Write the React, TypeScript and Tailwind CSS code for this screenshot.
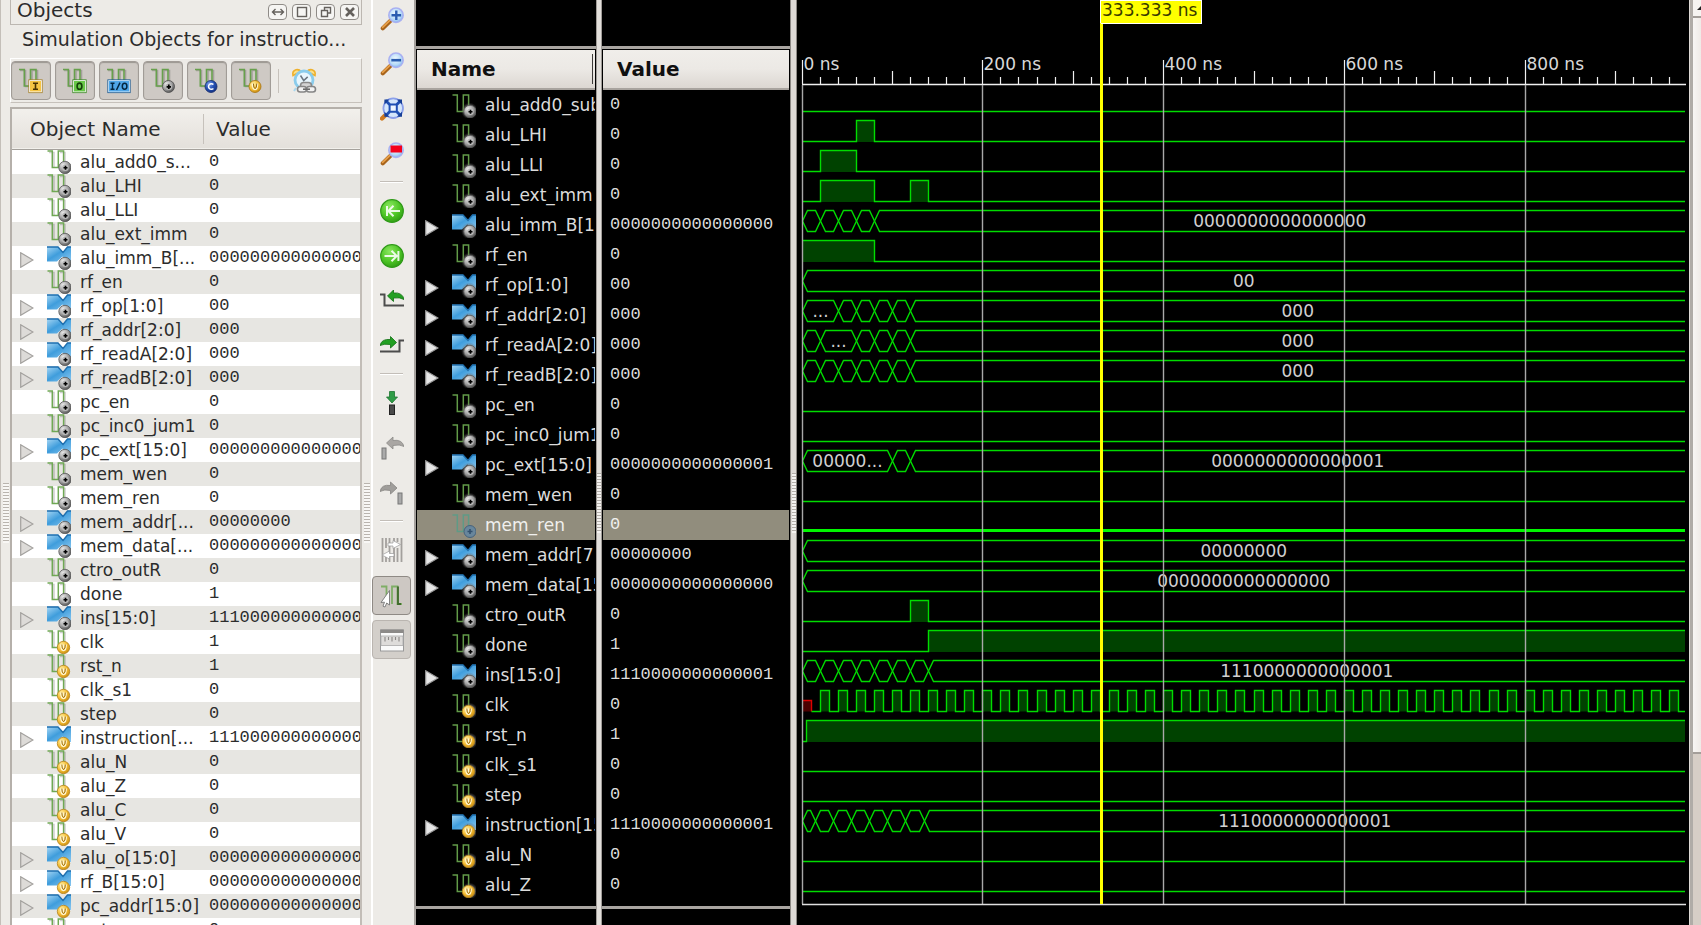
import React from "react";

type Badge = "internal" | "variable";
type Signal = { name: string; short?: string; value: string; bus?: boolean; badge: Badge };

const ZEROS = "0000000000000000";
const INS = "1110000000000001";

const objects: Signal[] = [
  { name: "alu_add0_s...", value: "0", badge: "internal" },
  { name: "alu_LHI", value: "0", badge: "internal" },
  { name: "alu_LLI", value: "0", badge: "internal" },
  { name: "alu_ext_imm", value: "0", badge: "internal" },
  { name: "alu_imm_B[...", value: ZEROS, bus: true, badge: "internal" },
  { name: "rf_en", value: "0", badge: "internal" },
  { name: "rf_op[1:0]", value: "00", bus: true, badge: "internal" },
  { name: "rf_addr[2:0]", value: "000", bus: true, badge: "internal" },
  { name: "rf_readA[2:0]", value: "000", bus: true, badge: "internal" },
  { name: "rf_readB[2:0]", value: "000", bus: true, badge: "internal" },
  { name: "pc_en", value: "0", badge: "internal" },
  { name: "pc_inc0_jum1", value: "0", badge: "internal" },
  { name: "pc_ext[15:0]", value: ZEROS, bus: true, badge: "internal" },
  { name: "mem_wen", value: "0", badge: "internal" },
  { name: "mem_ren", value: "0", badge: "internal" },
  { name: "mem_addr[...", value: "00000000", bus: true, badge: "internal" },
  { name: "mem_data[...", value: ZEROS, bus: true, badge: "internal" },
  { name: "ctro_outR", value: "0", badge: "internal" },
  { name: "done", value: "1", badge: "internal" },
  { name: "ins[15:0]", value: INS, bus: true, badge: "internal" },
  { name: "clk", value: "1", badge: "variable" },
  { name: "rst_n", value: "1", badge: "variable" },
  { name: "clk_s1", value: "0", badge: "variable" },
  { name: "step", value: "0", badge: "variable" },
  { name: "instruction[...", value: INS, bus: true, badge: "variable" },
  { name: "alu_N", value: "0", badge: "variable" },
  { name: "alu_Z", value: "0", badge: "variable" },
  { name: "alu_C", value: "0", badge: "variable" },
  { name: "alu_V", value: "0", badge: "variable" },
  { name: "alu_o[15:0]", value: ZEROS, bus: true, badge: "variable" },
  { name: "rf_B[15:0]", value: ZEROS, bus: true, badge: "variable" },
  { name: "pc_addr[15:0]", value: ZEROS, bus: true, badge: "variable" },
  { name: "out_mem_ou", value: "0", badge: "variable" },
];

type Wave =
  | { kind: "level"; high: [number, number][] }
  | { kind: "clock" }
  | { kind: "bus"; cuts: number[]; labels: Record<number, string> };

const END = 10000;
const low: Wave = { kind: "level", high: [] };

const waves: (Signal & { wave: Wave })[] = [
  { name: "alu_add0_sub1", value: "0", badge: "internal", wave: low },
  { name: "alu_LHI", value: "0", badge: "internal", wave: { kind: "level", high: [[60, 80]] } },
  { name: "alu_LLI", value: "0", badge: "internal", wave: { kind: "level", high: [[20, 60]] } },
  { name: "alu_ext_imm", value: "0", badge: "internal", wave: { kind: "level", high: [[20, 80], [120, 140]] } },
  { name: "alu_imm_B[15:0]", short: "alu_imm_B[1", value: ZEROS, bus: true, badge: "internal", wave: { kind: "bus", cuts: [20, 40, 60, 80], labels: { 4: ZEROS } } },
  { name: "rf_en", value: "0", badge: "internal", wave: { kind: "level", high: [[0, 80]] } },
  { name: "rf_op[1:0]", value: "00", bus: true, badge: "internal", wave: { kind: "bus", cuts: [], labels: { 0: "00" } } },
  { name: "rf_addr[2:0]", value: "000", bus: true, badge: "internal", wave: { kind: "bus", cuts: [40, 60, 80, 100, 120], labels: { 0: "...", 5: "000" } } },
  { name: "rf_readA[2:0]", value: "000", bus: true, badge: "internal", wave: { kind: "bus", cuts: [20, 60, 80, 100, 120], labels: { 1: "...", 5: "000" } } },
  { name: "rf_readB[2:0]", value: "000", bus: true, badge: "internal", wave: { kind: "bus", cuts: [20, 40, 60, 80, 100, 120], labels: { 6: "000" } } },
  { name: "pc_en", value: "0", badge: "internal", wave: low },
  { name: "pc_inc0_jum1", value: "0", badge: "internal", wave: low },
  { name: "pc_ext[15:0]", value: "0000000000000001", bus: true, badge: "internal", wave: { kind: "bus", cuts: [100, 120], labels: { 0: "00000...", 2: "0000000000000001" } } },
  { name: "mem_wen", value: "0", badge: "internal", wave: low },
  { name: "mem_ren", value: "0", badge: "internal", wave: low },
  { name: "mem_addr[7:0]", short: "mem_addr[7", value: "00000000", bus: true, badge: "internal", wave: { kind: "bus", cuts: [], labels: { 0: "00000000" } } },
  { name: "mem_data[15:0]", short: "mem_data[15", value: ZEROS, bus: true, badge: "internal", wave: { kind: "bus", cuts: [], labels: { 0: ZEROS } } },
  { name: "ctro_outR", value: "0", badge: "internal", wave: { kind: "level", high: [[120, 140]] } },
  { name: "done", value: "1", badge: "internal", wave: { kind: "level", high: [[140, END]] } },
  { name: "ins[15:0]", value: INS, bus: true, badge: "internal", wave: { kind: "bus", cuts: [20, 40, 60, 80, 100, 120, 140], labels: { 7: INS } } },
  { name: "clk", value: "0", badge: "variable", wave: { kind: "clock" } },
  { name: "rst_n", value: "1", badge: "variable", wave: { kind: "level", high: [[5, END]] } },
  { name: "clk_s1", value: "0", badge: "variable", wave: low },
  { name: "step", value: "0", badge: "variable", wave: low },
  { name: "instruction[15:0]", short: "instruction[15", value: INS, bus: true, badge: "variable", wave: { kind: "bus", cuts: [15, 35, 55, 75, 95, 115, 135], labels: { 7: INS } } },
  { name: "alu_N", value: "0", badge: "variable", wave: low },
  { name: "alu_Z", value: "0", badge: "variable", wave: low },
];

const SELECTED = 14;

/* ---------- signal icons ---------- */

function Defs() {
  return (
    <svg className="absolute size-0" aria-hidden="true">
      <defs>
        <radialGradient id="gGray" cx="0.35" cy="0.3" r="0.8">
          <stop offset="0" stopColor="#ececec" />
          <stop offset="0.5" stopColor="#a2a2a2" />
          <stop offset="1" stopColor="#484848" />
        </radialGradient>
        <radialGradient id="gGold" cx="0.35" cy="0.3" r="0.8">
          <stop offset="0" stopColor="#fff0a8" />
          <stop offset="0.5" stopColor="#f6c038" />
          <stop offset="1" stopColor="#c4860c" />
        </radialGradient>
        <radialGradient id="gNavy" cx="0.35" cy="0.3" r="0.8">
          <stop offset="0" stopColor="#7fa0ea" />
          <stop offset="0.5" stopColor="#2450b4" />
          <stop offset="1" stopColor="#122c78" />
        </radialGradient>
        <linearGradient id="gBlue" x1="0" y1="0" x2="1" y2="1">
          <stop offset="0" stopColor="#a6d6f4" />
          <stop offset="0.45" stopColor="#3f9ddc" />
          <stop offset="1" stopColor="#8cc8f0" />
        </linearGradient>
        <radialGradient id="gGlow">
          <stop offset="0" stopColor="#d8d8d8" stopOpacity="0.8" />
          <stop offset="0.65" stopColor="#8a8a8a" stopOpacity="0.6" />
          <stop offset="1" stopColor="#555" stopOpacity="0" />
        </radialGradient>
        <radialGradient id="gGreen" cx="0.4" cy="0.3" r="0.75">
          <stop offset="0" stopColor="#8be860" />
          <stop offset="0.6" stopColor="#4cc424" />
          <stop offset="1" stopColor="#2f9a14" />
        </radialGradient>
        <radialGradient id="gLens" cx="0.45" cy="0.4" r="0.6">
          <stop offset="0" stopColor="#f2faff" />
          <stop offset="0.7" stopColor="#b5daf8" />
          <stop offset="1" stopColor="#86b4ee" />
        </radialGradient>
      </defs>
    </svg>
  );
}

function BadgeMark({ badge }: { badge: Badge }) {
  return badge === "internal" ? (
    <g>
      <circle cx="18" cy="17.5" r="6.2" fill="url(#gGray)" stroke="#585858" strokeWidth="0.8" />
      <circle cx="18.4" cy="17.8" r="3.2" fill="#bcbcbc" />
      <path d="M18.500 15.800v4M16.500 17.800h4" stroke="#000" strokeWidth="1.600" />
    </g>
  ) : (
    <g>
      <circle cx="16.5" cy="17.5" r="6.2" fill="url(#gGold)" stroke="#b48422" strokeWidth="0.8" />
      <path d="M13.8 14.6q0 6 2.7 6t2.7-6M16.5 14.5v4" fill="none" stroke="#fff6d0" strokeWidth="1.4" />
      <path d="M14.8 14.6q0 4.4 1.8 5 1.8-.6 1.8-5" fill="none" stroke="#8a5c08" strokeWidth="0.8" />
    </g>
  );
}

function SignalIcon({ bus, badge, dark, dim }: { bus?: boolean; badge: Badge; dark?: boolean; dim?: boolean }) {
  return (
    <svg viewBox="0 0 24 24" className="size-6 shrink-0" aria-hidden="true">
      {bus ? (
        <>
          <path d="M0 .8H11L16 6.2L20.5 .8H24V16H20L15.5 10.5L10 15.5H0Z" fill="url(#gBlue)" />
          <path d="M0 1H11L16 6.4L20.5 1H24" fill="none" stroke="#1f6fae" strokeWidth="1.4" />
        </>
      ) : (
        <>
          {!dark && <path d="M2 2.5H7V17.5M13 2.5H18V12" fill="none" stroke="#000" strokeOpacity="0.18" strokeWidth="1.6" />}
          <path d="M.5 1H5.3V17.5H11.3V1H16.6V13" fill="none" stroke={dim ? "#5f9a86" : dark ? "#629a48" : "#6fa854"} strokeWidth="1.5" />
        </>
      )}
      {dark && !dim && <circle cx="17.5" cy="17" r="8.5" fill="url(#gGlow)" />}
      {dim ? (
        <g>
          <circle cx="18" cy="17.5" r="6" fill="#68869c" stroke="#46627c" />
          <path d="M18 15v5M15.500 17.500h5" stroke="#33506e" strokeWidth="1.600" />
        </g>
      ) : (
        <BadgeMark badge={badge} />
      )}
    </svg>
  );
}

function FilterIcon({ tag }: { tag: "I" | "O" | "IO" | "S" | "C" | "V" }) {
  return (
    <svg viewBox="0 0 26 26" className="size-[26px]" aria-hidden="true">
      <path d="M2 2.5H7.5V18.5H14V2.5H19.5V14" fill="none" stroke="#000" strokeOpacity="0.2" strokeWidth="1.6" />
      <path d="M1 1.5H6.3V18H12.5V1.5H18V14" fill="none" stroke="#67a04c" strokeWidth="1.6" />
      {tag === "I" && (
        <g>
          <rect x="11.5" y="12.5" width="12" height="11.5" fill="#f6c443" stroke="#fff" />
          <rect x="10.8" y="11.8" width="13.4" height="12.9" fill="none" stroke="#a8842c" strokeWidth="0.8" />
          <path d="M15 15.2h5M17.5 15.2v6M15 21.2h5" stroke="#4a3200" strokeWidth="1.6" fill="none" />
        </g>
      )}
      {tag === "O" && (
        <g>
          <rect x="11.5" y="12.5" width="12" height="11.5" fill="#68c848" stroke="#fff" />
          <rect x="10.8" y="11.8" width="13.4" height="12.9" fill="none" stroke="#3d8a26" strokeWidth="0.8" />
          <ellipse cx="17.5" cy="18.2" rx="2.4" ry="3.1" stroke="#14400a" strokeWidth="1.6" fill="none" />
        </g>
      )}
      {tag === "IO" && (
        <g>
          <rect x="2.5" y="12.5" width="21" height="11.5" fill="#4fa6e8" stroke="#d8efff" />
          <rect x="1.8" y="11.8" width="22.4" height="12.9" fill="none" stroke="#1d5c94" strokeWidth="0.8" />
          <path d="M4.5 15.3h4M6.5 15.3v6M4.5 21.3h4M10.5 22l3.5-7.4" stroke="#04263f" strokeWidth="1.5" fill="none" />
          <ellipse cx="18.6" cy="18.3" rx="2.3" ry="3" stroke="#04263f" strokeWidth="1.5" fill="none" />
        </g>
      )}
      {tag === "S" && (
        <g>
          <circle cx="18.5" cy="18.5" r="6" fill="url(#gGray)" stroke="#4a4a4a" strokeWidth="0.8" />
          <circle cx="18.8" cy="18.8" r="3.2" fill="#b4b4b4" />
          <path d="M18.800 16.600v4.400M16.600 18.800h4.400" stroke="#000" strokeWidth="1.700" />
        </g>
      )}
      {tag === "C" && (
        <g>
          <circle cx="17" cy="18.5" r="6" fill="url(#gNavy)" stroke="#142c70" strokeWidth="0.8" />
          <path d="M19.4 16.6a2.8 2.8 0 1 0 0 3.8" stroke="#fff" strokeWidth="1.5" fill="none" />
        </g>
      )}
      {tag === "V" && (
        <g>
          <circle cx="17" cy="18.5" r="6" fill="url(#gGold)" stroke="#a87412" strokeWidth="0.8" />
          <path d="M14.4 15.6q0 6 2.6 6t2.6-6" fill="none" stroke="#fff6d0" strokeWidth="1.4" />
          <path d="M15.4 15.6q0 4.4 1.7 5 1.7-.6 1.7-5" fill="none" stroke="#8a5c08" strokeWidth="0.9" />
        </g>
      )}
    </svg>
  );
}

function ClockIcon() {
  return (
    <svg viewBox="0 0 26 26" className="size-[26px]" aria-hidden="true">
      <path d="M2 7.500Q1 3 5 1.800Q8 1 10 3.500ZM24 7.500Q25 3 21 1.800Q18 1 16 3.500Z" fill="#fae08c" stroke="#eeb02c" strokeWidth="1.600" />
      <circle cx="13" cy="12" r="9" fill="#e8f6fd" stroke="#8accec" strokeWidth="2.800" />
      <path d="M9.500 7.500l3.200 5 4-3.600" fill="none" stroke="#6c7680" strokeWidth="1.500" />
      <path d="M5 20l-2 3" stroke="#a9d8ee" strokeWidth="2" />
      <rect x="9.500" y="14.500" width="11" height="6.500" rx="3.200" fill="#d4d4d4" stroke="#8a8a8a" strokeWidth="1.600" />
      <rect x="6.500" y="18.500" width="9" height="5.500" rx="2.700" fill="#f2f2f2" stroke="#858585" strokeWidth="1.600" />
      <rect x="15.500" y="18.500" width="9" height="5.500" rx="2.700" fill="#f2f2f2" stroke="#858585" strokeWidth="1.600" />
      <path d="M12 21.200h7" stroke="#6a6a6a" strokeWidth="1.600" />
    </svg>
  );
}

/* ---------- vertical tool bar icons ---------- */

function Magnifier({ children, fit }: { children?: React.ReactNode; fit?: boolean }) {
  return (
    <svg viewBox="0 0 24 24" className="size-6" aria-hidden="true">
      {fit ? (
        <>
          <path d="M2 21.500l3-3" stroke="#d07a20" strokeWidth="4.400" strokeLinecap="round" />
          <circle cx="13.2" cy="11.2" r="9.8" fill="#d4e6fb" stroke="#8ca0ea" strokeWidth="1.8" />
        </>
      ) : (
        <>
          <path d="M2.8 21.2l7.4-7.2" stroke="#a8641c" strokeWidth="4.2" strokeLinecap="round" />
          <path d="M2.6 20.4l7-6.8" stroke="#eaa24a" strokeWidth="1.6" strokeLinecap="round" />
          <circle cx="16" cy="8.2" r="7.2" fill="url(#gLens)" stroke="#a9b0f2" strokeWidth="1.5" />
        </>
      )}
      {children}
    </svg>
  );
}

const ZoomIn = () => (
  <Magnifier>
    <path d="M16.3 3.4v9.6M11.5 8.2h9.6" stroke="#2a5cb0" strokeWidth="2.4" />
  </Magnifier>
);
const ZoomOut = () => (
  <Magnifier>
    <path d="M11.3 8.2h9.8" stroke="#2a5cb0" strokeWidth="2.6" />
  </Magnifier>
);
const ZoomFit = () => (
  <Magnifier fit>
    <path d="M9.6 7.6h7.2v7.2h-7.2z" fill="#eef6ff" stroke="#1f4fb4" strokeWidth="2" />
    <path d="M5.6 3.6l4 4M20.8 3.6l-4 4M5.6 18.8l4-4M20.8 18.8l-4-4" stroke="#1f4fb4" strokeWidth="2.8" />
    <path d="M4.4 2.6h5l-5 5zM22 2.6h-5l5 5zM4.4 19.8h5l-5-5zM22 19.8h-5l5-5z" fill="#173f96" />
  </Magnifier>
);
const ZoomCursor = () => (
  <Magnifier>
    <rect x="10.5" y="3.5" width="11.5" height="7" fill="#f4001c" />
  </Magnifier>
);

function GoCircle({ forward }: { forward?: boolean }) {
  return (
    <svg viewBox="0 0 24 24" className="size-6" aria-hidden="true">
      <circle cx="12" cy="12" r="11.3" fill="url(#gGreen)" stroke="#2f9a18" strokeWidth="1.2" />
      {forward ? (
        <path d="M4.5 12h12M11.5 6.8l5.2 5.2-5.2 5.2M18.4 7v10" fill="none" stroke="#fff" strokeOpacity="0.88" strokeWidth="2" />
      ) : (
        <path d="M20 12H8.5M13.5 6.8L8.3 12l5.2 5.2M7 7v10" fill="none" stroke="#fff" strokeOpacity="0.88" strokeWidth="2" />
      )}
    </svg>
  );
}

const PrevEdge = () => (
  <svg viewBox="0 0 24 24" className="size-6" aria-hidden="true">
    <path d="M0 5.5H4.5V16.5H24" fill="none" stroke="#4c4c4c" strokeWidth="2" />
    <path d="M7.500 7L13.500 1V4q9-1 10.500 6.500Q20 8 13.500 9V12.500z" fill="#22a022" stroke="#0f6e12" strokeWidth="0.800" />
  </svg>
);
const NextEdge = () => (
  <svg viewBox="0 0 24 24" className="size-6" aria-hidden="true">
    <path d="M0 17.500H19.500V6.500H24" fill="none" stroke="#4c4c4c" strokeWidth="2" />
    <path d="M16.500 8.500L10.500 2.500V5.500q-9-1-10.500 6Q4 9.500 10.500 10.500V14z" fill="#22a022" stroke="#0f6e12" strokeWidth="0.800" />
  </svg>
);
const AddMarker = () => (
  <svg viewBox="0 0 24 24" className="size-6" aria-hidden="true">
    <path d="M9.500 .5h5v5.500h3l-5.500 6L6.500 6h3z" fill="#2f9c46" stroke="#1c7430" strokeWidth="0.800" />
    <rect x="9.500" y="14" width="5" height="9.500" fill="#4a4a4a" stroke="#222" />
  </svg>
);
const PrevMarker = () => (
  <svg viewBox="0 0 24 24" className="size-6" aria-hidden="true">
    <path d="M6.500 7L13 1V4.500q9-1.500 11 6Q20 8 13 9.500V13z" fill="#a9a6a3" stroke="#8c8a88" strokeWidth="0.8" />
    <rect x="2" y="12" width="4" height="11" fill="#aaa" stroke="#777" />
  </svg>
);
const NextMarker = () => (
  <svg viewBox="0 0 24 24" className="size-6" aria-hidden="true">
    <path d="M17 7L10.500 1V4.500q-9-1.500-10.500 6Q4 8 10.500 9.500V13z" fill="#a09e9b" stroke="#868482" strokeWidth="0.8" />
    <rect x="18" y="12" width="4" height="11" fill="#aaa" stroke="#777" />
  </svg>
);
const SwapCursors = () => (
  <svg viewBox="0 0 24 24" className="size-6" aria-hidden="true">
    <path d="M2.500 0v24M6 0v10M6 19v5M9.500 0v24M14 0v24M17.500 0v4M17.500 10v14M21.500 0v24" stroke="#a3a09d" strokeWidth="1.800" />
    <path d="M20.500 6.500L13 2.500v2.500H8v3h5v2.500zM2 17l7.500-4v2.500H14v3H9.500V21z" fill="#fff" stroke="#999" strokeWidth="0.7" />
  </svg>
);
const SnapTransition = () => (
  <svg viewBox="0 0 24 24" className="size-6" aria-hidden="true">
    <path d="M1 2.500H6.500V20M12 20V2.500H17.500V20H22" fill="none" stroke="#7fae66" strokeWidth="1.800" />
    <path d="M18 2.500V20H21" fill="none" stroke="#3f6b2c" strokeWidth="1.800" />
    <path d="M9.500 6.500V21l-2.800-2L5 23l-2-.8 1.500-4-3.500.3z" fill="#fff" stroke="#777" strokeWidth="0.900" />
  </svg>
);
const FloatRuler = () => (
  <svg viewBox="0 0 24 24" className="size-6" aria-hidden="true">
    <rect x="0.500" y="2" width="23" height="21" fill="#fafafa" stroke="#999" />
    <rect x="0.500" y="1.500" width="23" height="3.500" fill="#8c8a88" />
    <rect x="1" y="8" width="22" height="9.500" fill="#dedcda" stroke="#aaa" strokeWidth="0.800" />
    <path d="M5 9v4.500M8.500 9v3M12 9v4.500M15.500 9v3M19 9v4.500" stroke="#8a8886" strokeWidth="1.100" />
  </svg>
);

/* ---------- small pieces ---------- */

function Expander({ dark, label }: { dark?: boolean; label: string }) {
  return (
    <button type="button" aria-label={label} className="mt-1 flex h-4 w-[14px] items-center justify-center">
      <svg viewBox="0 0 14 16" className="h-4 w-[14px]" aria-hidden="true">
        <path d="M.7 .7L13 8L.7 15.300Z" fill={dark ? "#e8e8e8" : "#dddbd8"} stroke={dark ? "#9a9a9a" : "#a3a19e"} strokeWidth="1.200" />
      </svg>
    </button>
  );
}

function Grip() {
  return <div className="h-[60px] w-[6px] bg-[repeating-linear-gradient(to_bottom,#b9b4ae_0px,#b9b4ae_1px,#f8f7f5_1px,#f8f7f5_3px)]" />;
}

function Splitter({ wide }: { wide?: boolean }) {
  return (
    <div
      className={
        wide
          ? "flex w-[7px] shrink-0 items-center justify-center border-x border-[#8d8985] bg-[#dedad6] pt-[80px]"
          : "flex w-[6px] shrink-0 items-center justify-center border-x border-[#a09c98] bg-[#e2dfdb] pt-[80px]"
      }
    >
      <div className="h-[60px] w-1 bg-[repeating-linear-gradient(to_bottom,#b3aea9_0px,#b3aea9_1px,#f4f2f0_1px,#f4f2f0_3px)]" />
    </div>
  );
}

function TitleButton({ label, children }: { label: string; children: React.ReactNode }) {
  return (
    <button type="button" aria-label={label} className="flex h-4 w-[19px] items-center justify-center rounded-[4px] border border-[#8f8b87] bg-[#f6f5f3]">
      <svg viewBox="0 0 14 12" className="h-3 w-[14px]" fill="none" stroke="#65615d" strokeWidth="1.400" aria-hidden="true">
        {children}
      </svg>
    </button>
  );
}

const filters: { tag: "I" | "O" | "IO" | "S" | "C" | "V"; label: string }[] = [
  { tag: "I", label: "Input ports" },
  { tag: "O", label: "Output ports" },
  { tag: "IO", label: "Inout ports" },
  { tag: "S", label: "Internal signals" },
  { tag: "C", label: "Constants" },
  { tag: "V", label: "Variables" },
];

function ObjectsPanel() {
  return (
    <section className="flex w-[362px] shrink-0 flex-col pl-[10px]">
      <header className="flex h-[25px] shrink-0 items-start justify-between border-b border-l border-r border-[#bcb7b1] pl-[6px] pr-[2px]">
        <h2 className="text-[20px] leading-[20px]">Objects</h2>
        <div className="mt-1 flex gap-[5px]">
          <TitleButton label="Slide"><path d="M1.500 6h11M4.500 3L1.500 6l3 3M9.500 3l3 3-3 3" /></TitleButton>
          <TitleButton label="Maximize"><rect x="2.500" y="1.500" width="9" height="9" /></TitleButton>
          <TitleButton label="Float"><path d="M5.500 4V1.500h6v5.500H9M2.500 4.500h6v6h-6z" /></TitleButton>
          <TitleButton label="Close"><path d="M3 2l8 8M11 2l-8 8" strokeWidth="2.600" /></TitleButton>
        </div>
      </header>
      <p className="h-[33px] shrink-0 truncate pl-3 text-[19px] leading-[28px]">Simulation Objects for instructio...</p>
      <div className="flex h-[45px] shrink-0 items-center gap-1 border border-[#c6c1bb] border-l-[#fff] border-t-[#fff]">
        {filters.map((f) => (
          <button key={f.tag} type="button" aria-label={f.label} className="flex h-[39px] w-[40px] items-center justify-center rounded-[4px] border border-[#a19c97] bg-[#cec9c4] shadow-[inset_0_1px_1px_#9b9691]">
            <FilterIcon tag={f.tag} />
          </button>
        ))}
        <span className="mx-[3px] h-6 w-px bg-[#c6c1bb]" />
        <button type="button" aria-label="Link time" className="flex size-9 items-center justify-center">
          <ClockIcon />
        </button>
      </div>
      <div className="mt-1 min-h-0 flex-1 overflow-hidden border-2 border-b-0 border-[#c2bdb7] border-l-[#b5b0aa] border-t-[#b5b0aa]">
        <table className="w-full table-fixed border-collapse">
          <thead>
            <tr className="h-[40px] border-b border-[#a5a19c] bg-gradient-to-b from-[#f2f0ec] to-[#e4e0db] text-left text-[20px]">
              <th className="w-[192px] p-0 pl-[18px] font-normal">
                <div className="flex h-[30px] items-center border-r border-[#c6c1bb]">Object Name</div>
              </th>
              <th className="p-0 pl-3 font-normal">Value</th>
            </tr>
          </thead>
          <tbody>
            {objects.map((o) => (
              <tr key={o.name} className="h-6 bg-white even:bg-[#e7e6e2]">
                <td className="p-0">
                  <div className="flex h-6 items-center overflow-hidden whitespace-nowrap pl-2 text-[17px] leading-6">
                    <span className="w-[27px] shrink-0">{o.bus && <Expander label={`Expand ${o.name}`} />}</span>
                    <SignalIcon bus={o.bus} badge={o.badge} />
                    <span className="pl-[9px]">{o.name}</span>
                  </div>
                </td>
                <td className="p-0">
                  <div className="h-6 overflow-hidden whitespace-nowrap pl-[5px] font-['Liberation_Mono',monospace] text-[17px] leading-6">{o.value}</div>
                </td>
              </tr>
            ))}
          </tbody>
        </table>
      </div>
    </section>
  );
}

function ToolBarSeparator() {
  return <div className="my-[5px] h-[2px] w-[23px] shrink-0 border-b border-white bg-[#c3beb8]" />;
}

const toolGroups: { label: string; icon: React.ReactNode }[][] = [
  [
    { label: "Zoom in", icon: <ZoomIn /> },
    { label: "Zoom out", icon: <ZoomOut /> },
    { label: "Zoom to full view", icon: <ZoomFit /> },
    { label: "Zoom to cursor", icon: <ZoomCursor /> },
  ],
  [
    { label: "Go to time 0", icon: <GoCircle /> },
    { label: "Go to latest time", icon: <GoCircle forward /> },
    { label: "Previous transition", icon: <PrevEdge /> },
    { label: "Next transition", icon: <NextEdge /> },
  ],
  [
    { label: "Add marker", icon: <AddMarker /> },
    { label: "Previous marker", icon: <PrevMarker /> },
    { label: "Next marker", icon: <NextMarker /> },
  ],
];

function ToolBar() {
  return (
    <nav aria-label="Waveform tools" className="flex w-[45px] shrink-0 flex-col items-center border-l-2 border-r-2 border-l-white border-r-[#a5a19d] pr-1">
      {toolGroups.map((group, i) => (
        <React.Fragment key={i}>
          {i > 0 && <ToolBarSeparator />}
          {group.map((t, j) => (
            <button
              key={t.label}
              type="button"
              aria-label={t.label}
              className={i === 0 && j === 0 ? "flex h-[41px] w-[39px] shrink-0 items-center justify-center pb-1" : "flex h-[45px] w-[39px] shrink-0 items-center justify-center"}
            >
              {t.icon}
            </button>
          ))}
        </React.Fragment>
      ))}
      <ToolBarSeparator />
      <button type="button" aria-label="Swap cursors" className="flex h-[45px] w-[39px] shrink-0 items-center justify-center">
        <SwapCursors />
      </button>
      <button type="button" aria-label="Snap to transition" className="mt-1 flex h-[39px] w-[39px] shrink-0 items-center justify-center rounded-[4px] border border-[#8f8a85] bg-[#cdc8c3]">
        <SnapTransition />
      </button>
      <button type="button" aria-label="Floating ruler" className="mt-[5px] flex h-[39px] w-[39px] shrink-0 items-center justify-center rounded-[4px] border border-[#bab5b0] bg-[#d3cfca]">
        <FloatRuler />
      </button>
    </nav>
  );
}

function DarkColumn({ title, className, children }: { title: string; className: string; children: React.ReactNode }) {
  return (
    <div className={className}>
      <div className="h-[46px] shrink-0" />
      <div className="h-[3px] shrink-0 bg-[#a9a5a1]" />
      <div className="mx-px mt-px flex h-[40px] shrink-0 items-center border-b-2 border-[#a8a39e] bg-gradient-to-b from-[#f0eeea] via-[#ece9e5] to-[#dcd7d2] pl-[14px] text-[20px] font-bold text-[#101010]">
        <span className="flex-1">{title}</span>
        {title === "Name" && <span className="mr-[2px] h-[30px] w-px bg-[#3c3a38]" />}
      </div>
      <ul className="mx-px">{children}</ul>
      <div className="mt-[6px] h-[3px] shrink-0 bg-[#a9a5a1]" />
    </div>
  );
}

function NameColumn() {
  return (
    <DarkColumn title="Name" className="flex w-[180px] shrink-0 flex-col overflow-hidden bg-black">
      {waves.map((w, i) => (
        <li
          key={w.name}
          className={
            i === SELECTED
              ? "flex h-[30px] items-center overflow-hidden whitespace-nowrap bg-[#918d7d] pl-2 pt-[2px] text-[17px] text-[#f0f0ee]"
              : "flex h-[30px] items-center overflow-hidden whitespace-nowrap pl-2 pt-[2px] text-[17px] text-[#dcdcdc]"
          }
        >
          <span className="w-[27px] shrink-0">{w.bus && <Expander dark label={`Expand ${w.name}`} />}</span>
          <SignalIcon bus={w.bus} badge={w.badge} dark dim={i === SELECTED} />
          <span className="min-w-0 flex-1 overflow-hidden pl-[9px]">{w.short ?? w.name}</span>
        </li>
      ))}
    </DarkColumn>
  );
}

function ValueColumn() {
  return (
    <DarkColumn title="Value" className="flex w-[188px] shrink-0 flex-col overflow-hidden bg-black">
      {waves.map((w, i) => (
        <li
          key={w.name}
          className={
            i === SELECTED
              ? "h-[30px] bg-[#918d7d] pl-[7px] font-['Liberation_Mono',monospace] text-[17px] leading-[30px] text-[#f0f0ee]"
              : "h-[30px] pl-[7px] font-['Liberation_Mono',monospace] text-[17px] leading-[30px] text-[#dcdcdc]"
          }
        >
          {w.value}
        </li>
      ))}
    </DarkColumn>
  );
}

/* ---------- waveform drawing ---------- */

const X0 = 5.5;
const timeX = (t: number) => X0 + Math.floor(t * 0.904);
const GREEN = "#00dc00";
const FILL = "#004200";

function useWidth(): [React.RefObject<HTMLDivElement | null>, number] {
  const ref = React.useRef<HTMLDivElement>(null);
  const [width, setWidth] = React.useState(893);
  React.useLayoutEffect(() => {
    const measure = () => ref.current && setWidth(ref.current.clientWidth);
    measure();
    window.addEventListener("resize", measure);
    return () => window.removeEventListener("resize", measure);
  }, []);
  return [ref, width];
}

function LevelWave({ high, top, right }: { high: [number, number][]; top: number; right: number }) {
  const bottom = top + 21;
  let d = `M${X0} ${high[0]?.[0] === 0 ? top : bottom}`;
  let open = false;
  high.forEach(([a, b]) => {
    const x = timeX(a);
    d += `H${x}V${top}`;
    if (b === END) {
      d += `H${right}`;
      open = true;
    } else {
      d += `H${timeX(b)}V${bottom}`;
    }
  });
  if (!open) d += `H${right}`;
  return (
    <g>
      {high.map(([a, b]) => {
        const x = timeX(a);
        return <rect key={a} x={x} y={top} width={(b === END ? right : timeX(b)) - x} height="21.5" fill={FILL} />;
      })}
      <path d={d} fill="none" stroke={GREEN} strokeWidth="1.4" />
    </g>
  );
}

function ClockWave({ top, right }: { top: number; right: number }) {
  const bottom = top + 21;
  const rects: React.ReactNode[] = [];
  let d = `M${timeX(10)} ${bottom}`;
  for (let t = 20; timeX(t) < right; t += 20) {
    const a = timeX(t);
    const b = Math.min(a + 9, right);
    rects.push(<rect key={t} x={a} y={top} width={b - a} height="21" fill={FILL} />);
    d += `H${a}V${top}H${b}V${bottom}`;
  }
  d += `H${right}`;
  return (
    <g>
      <rect x={X0} y={top + 10} width="9" height="11" fill="#4c0000" />
      <path d={`M${X0} ${top + 10}h9v11`} fill="none" stroke="#e00000" strokeWidth="1.4" />
      {rects}
      <path d={d} fill="none" stroke={GREEN} strokeWidth="1.4" />
    </g>
  );
}

function BusWave({ cuts, labels, top, right }: { cuts: number[]; labels: Record<number, string>; top: number; right: number }) {
  const bottom = top + 21;
  const mid = top + 10.5;
  const edges = [X0, ...cuts.map(timeX)];
  return (
    <g>
      {edges.map((a, i) => {
        const last = i === edges.length - 1;
        const b = last ? right : edges[i + 1];
        const d = last
          ? `M${b} ${top}H${a + 5}L${a} ${mid}L${a + 5} ${bottom}H${b}`
          : `M${a} ${mid}L${a + 5} ${top}H${b - 5}L${b} ${mid}L${b - 5} ${bottom}H${a + 5}Z`;
        return (
          <g key={i}>
            <path d={d} fill="none" stroke={GREEN} strokeWidth="1.4" />
            {labels[i] && (
              <text x={(a + b) / 2} y={top + 16} textAnchor="middle" fontSize="17" fill="#d0d0d0">
                {labels[i]}
              </text>
            )}
          </g>
        );
      })}
    </g>
  );
}

function WavePanel() {
  const [ref, width] = useWidth();
  const right = width - 4;
  const ticks: number[] = [];
  for (let t = 0; timeX(t) < right; t += 20) ticks.push(t);
  const majors = ticks.filter((t) => t % 200 === 0);
  return (
    <div ref={ref} className="relative min-w-0 flex-1 overflow-hidden bg-black">
      <svg className="block h-[925px] w-full font-['DejaVu_Sans',sans-serif]" role="img" aria-label="Waveforms">
        <path d={`M5 84.5H${right + 1}`} stroke="#f0f0f0" strokeWidth="1.4" />
        {ticks.map((t) => (
          <path key={t} d={`M${timeX(t)} ${t % 200 === 0 ? 60 : t % 100 === 0 ? 71 : 77}V84`} stroke="#f0f0f0" strokeWidth="1.2" />
        ))}
        {majors.map((t) => (
          <text key={t} x={timeX(t) + 1} y="70" fontSize="17" fill="#d8d8d8">
            {t} ns
          </text>
        ))}
        {waves.map((w, i) => {
          const top = 90.5 + i * 30;
          if (i === SELECTED) return <path key={w.name} d={`M${X0} ${top + 20}H${right}`} stroke="#00f800" strokeWidth="3" />;
          if (w.wave.kind === "level") return <LevelWave key={w.name} high={w.wave.high} top={top} right={right} />;
          if (w.wave.kind === "clock") return <ClockWave key={w.name} top={top} right={right} />;
          return <BusWave key={w.name} cuts={w.wave.cuts} labels={w.wave.labels} top={top} right={right} />;
        })}
        {majors.map((t) => (
          <path key={t} d={`M${timeX(t)} 85V904`} stroke="#a8a8a8" strokeWidth="1.4" />
        ))}
        <path d={`M5 904.5H${right + 1}`} stroke="#e0e0e0" strokeWidth="1.4" />
        <path d="M304.500 22V904" stroke="#ffff00" strokeWidth="3" />
        <path d="M303.500 0V23" stroke="#fff" />
      </svg>
      <div className="absolute left-[304px] top-0 flex h-6 w-[101px] items-center whitespace-nowrap border-b border-r border-t border-white bg-[#ffff00] pb-[2px] pl-px text-[17px] text-[#3a3a00]">
        333.333 ns
      </div>
    </div>
  );
}

function ScrollEdge() {
  return (
    <div className="flex w-[12px] shrink-0 border-l border-[#dedad6] bg-[#b0aca7] pl-[3px]">
      <div className="flex flex-1 flex-col bg-[#d6cec6]">
        <div className="flex h-[18px] items-center justify-end border-b-2 border-[#a39e99] bg-[#f6f4f1]">
          <svg viewBox="0 0 4 4" className="size-1" aria-hidden="true"><path d="M0 4L4 0V4Z" fill="#222" /></svg>
        </div>
        <div className="h-[736px] border-b-2 border-[#a39e99] bg-gradient-to-r from-[#f8f6f4] to-[#efebe7]" />
      </div>
    </div>
  );
}

export default function App() {
  return (
    <main className="relative flex h-screen overflow-hidden bg-[#edebe7] font-['DejaVu_Sans',sans-serif] text-[#2c2c2c]">
      <Defs />
      <div className="absolute inset-y-0 left-0 flex w-[10px] items-center justify-center border-l border-[#c4bfb9] pt-[100px]">
        <Grip />
      </div>
      <ObjectsPanel />
      <div className="flex w-[9px] shrink-0 items-center justify-center pt-[100px]">
        <Grip />
      </div>
      <ToolBar />
      <NameColumn />
      <Splitter />
      <ValueColumn />
      <Splitter wide />
      <WavePanel />
      <ScrollEdge />
    </main>
  );
}
